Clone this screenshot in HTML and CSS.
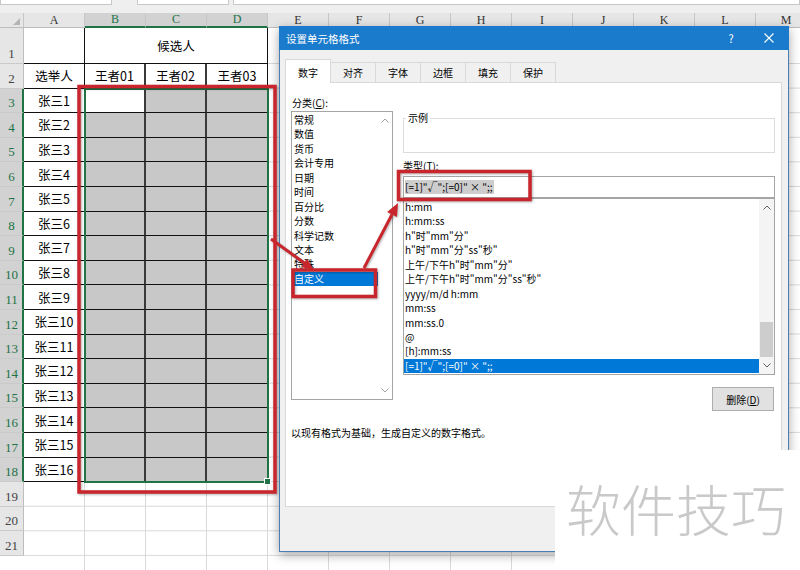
FILE: index.html
```html
<!DOCTYPE html>
<html lang="zh-CN">
<head>
<meta charset="utf-8">
<title>设置单元格格式</title>
<link rel="stylesheet" href="styles.css">
</head>
<body>
<div class="app">
  <div class="fbar"><div class="fbox namebox"></div><div class="fbox fxbox"></div><div class="fbox formula"></div></div>
  <div class="colheads">
    <div class="corner"><svg width="7" height="7" viewBox="0 0 7 7"><polygon points="7,0 7,7 0,7" fill="#b4b4b4"/></svg></div>
    <div class="ch">A</div><div class="ch on">B</div><div class="ch on">C</div><div class="ch on">D</div>
    <div class="ch">E</div><div class="ch">F</div><div class="ch">G</div><div class="ch">H</div><div class="ch">I</div><div class="ch">J</div><div class="ch">K</div><div class="ch">L</div><div class="ch">M</div>
  </div>
  <div class="main">
    <div class="rownums">
      <div class="rn tall">1</div><div class="rn">2</div>
      <div class="rn on">3</div><div class="rn on">4</div><div class="rn on">5</div><div class="rn on">6</div>
      <div class="rn on">7</div><div class="rn on">8</div><div class="rn on">9</div><div class="rn on">10</div>
      <div class="rn on">11</div><div class="rn on">12</div><div class="rn on">13</div><div class="rn on">14</div>
      <div class="rn on">15</div><div class="rn on">16</div><div class="rn on">17</div><div class="rn on">18</div>
      <div class="rn">19</div><div class="rn">20</div><div class="rn">21</div>
    </div>
    <div class="cells">
      <div class="stack">
        <div class="tbl">
          <div class="c"></div><div class="c span3">候选人</div>
          <div class="c">选举人</div><div class="c">王者01</div><div class="c">王者02</div><div class="c">王者03</div>
          <div class="c">张三1</div><div class="c"></div><div class="c g"></div><div class="c g"></div>
          <div class="c">张三2</div><div class="c g"></div><div class="c g"></div><div class="c g"></div>
          <div class="c">张三3</div><div class="c g"></div><div class="c g"></div><div class="c g"></div>
          <div class="c">张三4</div><div class="c g"></div><div class="c g"></div><div class="c g"></div>
          <div class="c">张三5</div><div class="c g"></div><div class="c g"></div><div class="c g"></div>
          <div class="c">张三6</div><div class="c g"></div><div class="c g"></div><div class="c g"></div>
          <div class="c">张三7</div><div class="c g"></div><div class="c g"></div><div class="c g"></div>
          <div class="c">张三8</div><div class="c g"></div><div class="c g"></div><div class="c g"></div>
          <div class="c">张三9</div><div class="c g"></div><div class="c g"></div><div class="c g"></div>
          <div class="c">张三10</div><div class="c g"></div><div class="c g"></div><div class="c g"></div>
          <div class="c">张三11</div><div class="c g"></div><div class="c g"></div><div class="c g"></div>
          <div class="c">张三12</div><div class="c g"></div><div class="c g"></div><div class="c g"></div>
          <div class="c">张三13</div><div class="c g"></div><div class="c g"></div><div class="c g"></div>
          <div class="c">张三14</div><div class="c g"></div><div class="c g"></div><div class="c g"></div>
          <div class="c">张三15</div><div class="c g"></div><div class="c g"></div><div class="c g"></div>
          <div class="c">张三16</div><div class="c g"></div><div class="c g"></div><div class="c g"></div>
        </div>
        <div class="sel"><span class="handle"></span></div>
      </div>
    </div>
  </div>

  <div class="dlg">
    <div class="titlebar">
      <span class="ttl">设置单元格格式</span>
      <span class="help">?</span>
      <span class="close"><svg width="10" height="10" viewBox="0 0 10 10"><path d="M0.5 0.5L9.5 9.5M9.5 0.5L0.5 9.5" stroke="#fff" stroke-width="1.1" fill="none"/></svg></span>
    </div>
    <div class="dbody">
      <div class="tabs">
        <div class="tab on">数字</div><div class="tab">对齐</div><div class="tab">字体</div><div class="tab">边框</div><div class="tab">填充</div><div class="tab">保护</div>
      </div>
      <div class="panel">
        <div class="lbl">分类(<u>C</u>):</div>
        <div class="cols">
          <div class="catbox">
            <ul class="cats">
              <li>常规</li><li>数值</li><li>货币</li><li>会计专用</li><li>日期</li><li>时间</li><li>百分比</li><li>分数</li><li>科学记数</li><li>文本</li><li>特殊</li><li class="on">自定义</li>
            </ul>
            <div class="vsb plain">
              <span class="arr"><svg width="8" height="5" viewBox="0 0 8 5"><path d="M0.5 4.5L4 1L7.5 4.5" stroke="#a0a0a0" fill="none"/></svg></span>
              <span class="track"></span>
              <span class="arr"><svg width="8" height="5" viewBox="0 0 8 5"><path d="M0.5 0.5L4 4L7.5 0.5" stroke="#a0a0a0" fill="none"/></svg></span>
            </div>
          </div>
          <div class="right">
            <fieldset class="sample"><legend>示例</legend><div class="sample-body"></div></fieldset>
            <div class="lbl2">类型(<u>T</u>):</div>
            <div class="input"><span class="hl">[=1]"√";[=0]" × ";;</span></div>
            <div class="typebox">
              <ul class="types">
                <li>h:mm</li>
                <li>h:mm:ss</li>
                <li>h"时"mm"分"</li>
                <li>h"时"mm"分"ss"秒"</li>
                <li>上午/下午h"时"mm"分"</li>
                <li>上午/下午h"时"mm"分"ss"秒"</li>
                <li>yyyy/m/d h:mm</li>
                <li>mm:ss</li>
                <li>mm:ss.0</li>
                <li>@</li>
                <li>[h]:mm:ss</li>
                <li class="on">[=1]"√";[=0]" × ";;</li>
              </ul>
              <div class="vsb">
                <span class="arr"><svg width="8" height="5" viewBox="0 0 8 5"><path d="M0.5 4.5L4 1L7.5 4.5" stroke="#606060" fill="none"/></svg></span>
                <span class="track"><span class="thumb"></span></span>
                <span class="arr"><svg width="8" height="5" viewBox="0 0 8 5"><path d="M0.5 0.5L4 4L7.5 0.5" stroke="#606060" fill="none"/></svg></span>
              </div>
            </div>
            <button class="btn" type="button">删除(<u>D</u>)</button>
          </div>
        </div>
        <p class="desc">以现有格式为基础，生成自定义的数字格式。</p>
      </div>
      <div class="footer"></div>
    </div>
  </div>

  <svg class="marks" width="800" height="570" viewBox="0 0 800 570">
    <g fill="none" stroke="#c8262c" stroke-width="3.5">
      <rect x="79" y="86.5" width="196" height="405.5"/>
      <rect x="293" y="270" width="82.5" height="26.5"/>
      <rect x="398.5" y="171.5" width="131.5" height="28"/>
      <line x1="271" y1="239" x2="305" y2="263.5" stroke-width="3"/>
      <line x1="364" y1="268" x2="392" y2="214.5" stroke-width="3"/>
    </g>
    <g fill="#c8262c">
      <polygon points="314,270 301.4,267.1 307.2,258.9"/>
      <polygon points="398,203 396.9,217 387.1,212"/>
    </g>
  </svg>

  <div class="wm">软件技巧</div>
</div>
</body>
</html>
```

FILE: styles.css
```css
* { box-sizing: border-box; margin: 0; padding: 0; }
html, body { width: 800px; height: 570px; overflow: hidden; background: #fff; }
body { font-family: "Noto Sans CJK SC", "Noto Sans", sans-serif; color: #000; }

.app { position: relative; width: 800px; height: 570px; overflow: hidden; background: #fff; }

/* formula bar remnant */
.fbar { height: 13px; background: #efefef; display: flex; align-items: flex-start; }
.fbox { height: 5px; background: #fff; border: 1px solid #c8c8c8; border-top: 0; }
.namebox { width: 112px; }
.fxbox { width: 92px; margin-left: 25px; }
.formula { flex: 1; margin-left: 4px; }

/* column headers */
.colheads { display: flex; height: 15px; background: #e6e6e6; overflow: hidden; }
.corner { width: 24px; flex: none; display: flex; align-items: flex-end; justify-content: flex-end; padding: 0 3px 2px 0; border-right: 1px solid #c6c6c6; border-bottom: 1px solid #bdbdbd; }
.ch { width: 61px; flex: none; border-right: 1px solid #c6c6c6; border-bottom: 1px solid #bdbdbd; font: 12px/14px "Liberation Serif", serif; text-align: center; color: #333; }
.ch.on { background: #d2d2d2; color: #217346; border-bottom: 2px solid #217346; line-height: 13px; }

/* sheet body */
.main { display: flex; height: 542px; }
.rownums { width: 24px; flex: none; display: flex; flex-direction: column; }
.rn { height: 24.6px; flex: none; background: #e6e6e6; border-right: 1px solid #bdbdbd; border-bottom: 1px solid #cacaca; font: 13px/1 "Liberation Serif", serif; color: #444; display: flex; align-items: flex-end; justify-content: center; padding-bottom: 3px; }
.rn.tall { height: 36px; }
.rn.on { background: #d2d2d2; color: #217346; border-right: 2px solid #217346; padding-left: 1px; }

.cells {
  flex: 1;
  background:
    linear-gradient(to left, #d9d9d9 1px, transparent 1px) 0 0 / 61px 100%,
    linear-gradient(#fff, #fff) 0 0 / 100% 35px no-repeat,
    linear-gradient(to top, #d9d9d9 1px, transparent 1px) 0 36px / 100% 24.6px,
    #fff;
}
.stack { display: grid; width: 246px; }
.stack > * { grid-area: 1 / 1; }
.tbl { display: grid; width: 244px; grid-template-columns: repeat(4, 61px); grid-template-rows: 36px repeat(17, 24.6px); }
.c { background: #fff; border-right: 1px solid #111; border-bottom: 1px solid #111; font-size: 12.5px; display: flex; align-items: center; justify-content: center; white-space: nowrap; }
.c.span3 { grid-column: span 3; }
.c.g { background: #c8c8c8; }
.c:nth-child(4n+4), .c:nth-child(4n+5) { border-right: 2px solid #3a3a3a; }
.c:nth-child(1) { border-right: 1px solid #111; }
.sel { align-self: start; justify-self: start; margin: 59.6px 0 0 60px; width: 185px; height: 395.6px; border: 2px solid #217346; position: relative; }
.handle { position: absolute; right: -4px; bottom: -4px; width: 7px; height: 7px; background: #217346; border: 1px solid #fff; }

/* dialog */
.dlg { position: absolute; left: 279px; top: 26px; width: 510px; height: 526px; background: #f0f0f0; border: 1px solid #4a7fb5; border-top: 0; box-shadow: 0 3px 10px rgba(0,0,0,0.35); display: flex; flex-direction: column; font-size: 10px; }
.titlebar { height: 24px; flex: none; background: #1a7acb; color: #fff; display: flex; align-items: center; padding-left: 7px; margin: 0 -1px; }
.ttl { flex: 1; font-size: 10.5px; }
.help { width: 36px; text-align: center; font-size: 11px; }
.close { width: 40px; height: 24px; display: flex; align-items: center; justify-content: center; }

.dbody { flex: 1; display: flex; flex-direction: column; padding: 9px 6px 0 5px; }
.tabs { display: flex; align-items: flex-end; height: 23px; position: relative; z-index: 1; }
.tab { height: 20px; padding: 0 12px; border: 1px solid #d9d9d9; border-bottom: 0; margin-left: -1px; background: #f0f0f0; line-height: 19px; }
.tab:first-child { margin-left: 0; }
.tab.on { height: 24px; margin-bottom: -1px; background: #fff; padding-top: 3px; }

.panel { height: 425px; flex: none; background: #fff; border: 1px solid #d9d9d9; padding: 11px 0 0 5px; }
.lbl { height: 17px; line-height: 17px; margin-left: 1px; }
u { text-decoration: underline; }
.cols { display: flex; align-items: flex-start; }

.catbox { width: 102px; height: 289px; border: 1px solid #a5a5a5; display: flex; }
.cats { list-style: none; flex: 1; padding-top: 1px; }
.cats li { height: 14.45px; line-height: 14.45px; padding-left: 2px; white-space: nowrap; }
.cats li.on { background: #0078d7; color: #fff; }

.vsb { width: 14px; flex: none; display: flex; flex-direction: column; }
.vsb .arr { height: 17px; display: flex; align-items: center; justify-content: center; }
.vsb .track { flex: 1; display: flex; flex-direction: column; justify-content: flex-end; }
.typebox .vsb { width: 15px; background: #f4f4f4; }
.thumb { height: 35px; margin: 0 1px 0 1px; background: #cdcdcd; }

.right { width: 372px; margin-left: 10px; display: flex; flex-direction: column; }
.sample { border: 1px solid #dcdcdc; padding: 0; }
.sample legend { font-size: 10px; line-height: 14px; padding: 0 2px; margin-left: 2px; }
.sample-body { height: 27px; }
.lbl2 { height: 19px; line-height: 17px; margin-top: 4px; }
.input { height: 22px; border: 1px solid #a5a5a5; background: #fff; padding: 3px 0 0 1px; line-height: 14px; white-space: nowrap; }
.hl { display: inline-block; background: #cdcdcd; line-height: 14px; padding-right: 1px; }
.typebox { height: 177px; border: 1px solid #a5a5a5; display: flex; }
.types { list-style: none; flex: 1; padding-top: 1px; }
.types li { height: 14.45px; line-height: 14.45px; padding-left: 1px; white-space: nowrap; }
.types li.on { background: #0078d7; color: #fff; }

.btn { align-self: flex-end; width: 62px; height: 24px; margin: 12px 1px 0 0; background: #e1e1e1; border: 1px solid #adadad; font: 10px "Noto Sans CJK SC", sans-serif; color: #000; }
.desc { margin-top: 15px; line-height: 14px; font-size: 10px; }

.footer { flex: 1; }

/* annotations */
.marks { position: absolute; left: 0; top: 0; pointer-events: none; filter: drop-shadow(1px 1px 1px rgba(0,0,0,0.3)); }

/* watermark */
.wm { position: absolute; left: 555px; top: 450px; width: 245px; height: 120px; background: #fff; padding: 30px 0 0 11px; font-size: 55px; line-height: 55px; font-weight: 300; color: #c9c9c9; white-space: nowrap; }
```
